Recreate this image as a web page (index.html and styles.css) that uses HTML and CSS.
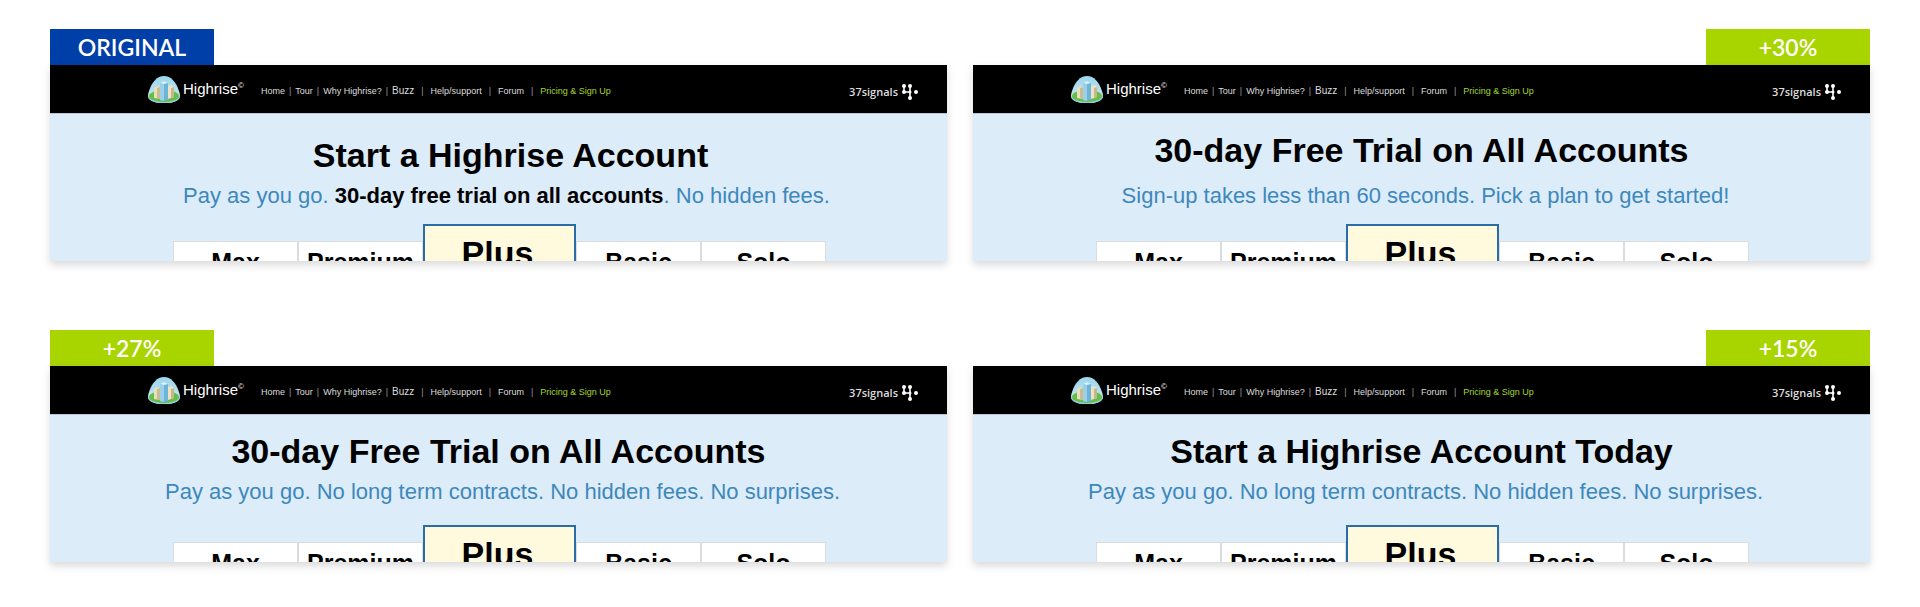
FILE: index.html
```html
<!DOCTYPE html>
<html lang="en">
<head>
  <meta charset="UTF-8">
  <meta name="viewport" content="width=device-width, initial-scale=1.0">
  <title>Highrise headline test</title>
  <link rel="stylesheet" href="styles.css">
</head>
<body>

  <!-- shared icons -->
  <svg class="sprite" aria-hidden="true">
    <defs>
      <linearGradient id="sky" x1="0" y1="0" x2="0" y2="1">
        <stop offset="0" stop-color="#9ad6ec"/>
        <stop offset="1" stop-color="#cfe9f3"/>
      </linearGradient>
      <clipPath id="dome">
        <path d="M16 0C23 0 28 6 31 15C33 21 32 23 28 25C22 28 10 28 4 25C0 23 -1 21 1 15C4 6 9 0 16 0Z"/>
      </clipPath>
    </defs>
    <symbol id="logo" viewBox="0 0 32 27">
      <g clip-path="url(#dome)">
        <rect width="32" height="27" fill="url(#sky)"/>
        <path d="M0 19C4 27 28 27 32 19V27H0Z" fill="#8ccfe0"/>
        <ellipse cx="16" cy="20" rx="15" ry="6" fill="#66bd48"/>
        <path d="M6 12L9 10L12 11V23L6 22Z" fill="#e9dfbb"/>
        <path d="M9 12L12 11V23H9Z" fill="#c9bd93"/>
        <path d="M20 10L23 9L26 11V21L20 23Z" fill="#eee3c0"/>
        <path d="M23 12L26 11V21L23 22Z" fill="#c5b88c"/>
        <path d="M12 7L16 5L20 7V24L16 25L12 24Z" fill="#6db4d8"/>
        <path d="M12 7L16 8V25L12 24Z" fill="#9bd0e8"/>
        <path d="M12 7L16 5L20 7L16 8Z" fill="#dff2fa"/>
      </g>
    </symbol>
    <symbol id="signals" viewBox="0 0 16 16">
      <path d="M2 2V8H8M8 2V14" fill="none" stroke="#fff" stroke-width="1.6"/>
      <g fill="#fff">
        <circle cx="2" cy="2" r="2"/>
        <circle cx="8" cy="2" r="2"/>
        <circle cx="2" cy="8" r="2"/>
        <circle cx="8" cy="8" r="1.5"/>
        <circle cx="14" cy="8" r="2"/>
        <circle cx="8" cy="14" r="2"/>
      </g>
    </symbol>
  </svg>

  <main class="variants">

    <section class="variant">
      <div class="tag tag-original">ORIGINAL</div>
      <div class="panel">
        <header class="topbar">
          <a class="brand" href="#"><svg class="logo"><use href="#logo"/></svg>Highrise<sup>©</sup></a>
          <nav class="menu">
            <a href="#">Home</a>
            <a href="#">Tour</a>
            <a href="#">Why Highrise?</a>
            <a class="buzz" href="#">Buzz</a>
            <a class="wide" href="#">Help/support</a>
            <a class="wide" href="#">Forum</a>
            <a class="wide signup" href="#">Pricing &amp; Sign Up</a>
          </nav>
          <a class="company" href="#">37signals<svg class="signals"><use href="#signals"/></svg></a>
        </header>
        <div class="intro intro-original">
          <h2>Start a Highrise Account</h2>
          <p>Pay as you go. <strong>30-day free trial on all accounts</strong>. No hidden fees.</p>
        </div>
        <ul class="plans">
          <li>Max</li>
          <li>Premium</li>
          <li class="plus">Plus</li>
          <li>Basic</li>
          <li>Solo</li>
        </ul>
      </div>
    </section>

    <section class="variant">
      <div class="tag tag-right">+30%</div>
      <div class="panel">
        <header class="topbar">
          <a class="brand" href="#"><svg class="logo"><use href="#logo"/></svg>Highrise<sup>©</sup></a>
          <nav class="menu">
            <a href="#">Home</a>
            <a href="#">Tour</a>
            <a href="#">Why Highrise?</a>
            <a class="buzz" href="#">Buzz</a>
            <a class="wide" href="#">Help/support</a>
            <a class="wide" href="#">Forum</a>
            <a class="wide signup" href="#">Pricing &amp; Sign Up</a>
          </nav>
          <a class="company" href="#">37signals<svg class="signals"><use href="#signals"/></svg></a>
        </header>
        <div class="intro intro-spaced">
          <h2>30-day Free Trial on All Accounts</h2>
          <p>Sign-up takes less than 60 seconds. Pick a plan to get started!</p>
        </div>
        <ul class="plans">
          <li>Max</li>
          <li>Premium</li>
          <li class="plus">Plus</li>
          <li>Basic</li>
          <li>Solo</li>
        </ul>
      </div>
    </section>

    <section class="variant">
      <div class="tag">+27%</div>
      <div class="panel">
        <header class="topbar">
          <a class="brand" href="#"><svg class="logo"><use href="#logo"/></svg>Highrise<sup>©</sup></a>
          <nav class="menu">
            <a href="#">Home</a>
            <a href="#">Tour</a>
            <a href="#">Why Highrise?</a>
            <a class="buzz" href="#">Buzz</a>
            <a class="wide" href="#">Help/support</a>
            <a class="wide" href="#">Forum</a>
            <a class="wide signup" href="#">Pricing &amp; Sign Up</a>
          </nav>
          <a class="company" href="#">37signals<svg class="signals"><use href="#signals"/></svg></a>
        </header>
        <div class="intro">
          <h2>30-day Free Trial on All Accounts</h2>
          <p>Pay as you go. No long term contracts. No hidden fees. No surprises.</p>
        </div>
        <ul class="plans">
          <li>Max</li>
          <li>Premium</li>
          <li class="plus">Plus</li>
          <li>Basic</li>
          <li>Solo</li>
        </ul>
      </div>
    </section>

    <section class="variant">
      <div class="tag tag-right">+15%</div>
      <div class="panel">
        <header class="topbar">
          <a class="brand" href="#"><svg class="logo"><use href="#logo"/></svg>Highrise<sup>©</sup></a>
          <nav class="menu">
            <a href="#">Home</a>
            <a href="#">Tour</a>
            <a href="#">Why Highrise?</a>
            <a class="buzz" href="#">Buzz</a>
            <a class="wide" href="#">Help/support</a>
            <a class="wide" href="#">Forum</a>
            <a class="wide signup" href="#">Pricing &amp; Sign Up</a>
          </nav>
          <a class="company" href="#">37signals<svg class="signals"><use href="#signals"/></svg></a>
        </header>
        <div class="intro">
          <h2>Start a Highrise Account Today</h2>
          <p>Pay as you go. No long term contracts. No hidden fees. No surprises.</p>
        </div>
        <ul class="plans">
          <li>Max</li>
          <li>Premium</li>
          <li class="plus">Plus</li>
          <li>Basic</li>
          <li>Solo</li>
        </ul>
      </div>
    </section>

  </main>

</body>
</html>
```
FILE: styles.css
```css
* {
  box-sizing: border-box;
}

body {
  margin: 0;
  background: #fff;
  color: #000;
  font-family: "Liberation Sans", Arial, sans-serif;
}

a {
  color: inherit;
  text-decoration: none;
}

.sprite {
  position: absolute;
  width: 0;
  height: 0;
}

.variants {
  display: grid;
  grid-template-columns: 1fr 1fr;
  gap: 69px 26px;
  padding: 29px 50px 45px;
}

.variant {
  display: flex;
  flex-direction: column;
}

.tag {
  width: 164px;
  background: #a8d400;
  color: #fff;
  font-family: Lato, sans-serif;
  font-size: 23px;
  font-weight: 600;
  line-height: 36px;
  text-align: center;
}

.tag-original {
  background: #003ea8;
}

.tag-right {
  align-self: flex-end;
}

.panel {
  background: #dcecf9;
  box-shadow: 0 4px 8px rgba(0, 0, 0, 0.15);
}

/* black site header */
.topbar {
  display: flex;
  align-items: center;
  height: 49px;
  padding: 0 29px 0 98px;
  background: #000;
  border-bottom: 1px solid #b9c6d0;
  color: #fff;
}

.brand {
  display: flex;
  align-items: center;
  font-size: 15px;
  line-height: 20px;
}

.brand sup {
  align-self: flex-start;
  margin-top: 5px;
  font-size: 8px;
  line-height: 10px;
}

.logo {
  width: 32px;
  height: 27px;
  margin-right: 3px;
}

.menu {
  display: flex;
  align-items: center;
  margin-left: 17px;
  padding-top: 4px;
  color: #ddd;
  font-size: 9px;
  line-height: 12px;
}

.menu a + a::before {
  content: "|";
  margin: 0 4px;
  color: #999;
  font-size: 9px;
}

.menu .buzz {
  font-size: 10px;
}

.menu a.wide::before {
  margin: 0 7px;
}

.menu .signup {
  color: #a4d62c;
}

.company {
  display: flex;
  align-items: center;
  gap: 4px;
  margin-left: auto;
  padding-top: 6px;
  color: #ddd;
  font-family: "Open Sans", sans-serif;
  font-size: 11px;
  font-weight: 600;
  line-height: 16px;
}

.signals {
  width: 16px;
  height: 16px;
}

/* headline block */
.intro {
  height: 110px;
  padding-top: 16px;
  text-align: center;
}

.intro h2 {
  margin: 0;
  font-size: 34px;
  line-height: 40px;
}

.intro p {
  margin: 9px 0 0;
  padding-left: 8px;
  color: #3e88bb;
  font-size: 22px;
  line-height: 24px;
}

.intro strong {
  color: #000;
}

.intro-original {
  padding-top: 21px;
  padding-left: 24px;
}

.intro-original p {
  padding-left: 0;
  padding-right: 8px;
}

.intro-spaced p {
  margin-top: 14px;
}

/* only the tops of the plan boxes show */
.plans {
  display: flex;
  justify-content: center;
  height: 37px;
  margin: 0;
  padding: 0 0 0 2px;
  overflow: hidden;
  list-style: none;
  font-size: 25px;
  font-weight: bold;
  line-height: 30px;
  text-align: center;
}

.plans li {
  width: 125px;
  height: 60px;
  margin-top: 17px;
  padding-top: 5px;
  background: #fff;
  border: 1px solid #d9dde0;
}

.plans .plus {
  width: 153px;
  margin-top: 0;
  background: #fff9dd;
  border: 2px solid #2a6da6;
  font-size: 34px;
  padding-top: 12px;
  padding-right: 4px;
}
```
